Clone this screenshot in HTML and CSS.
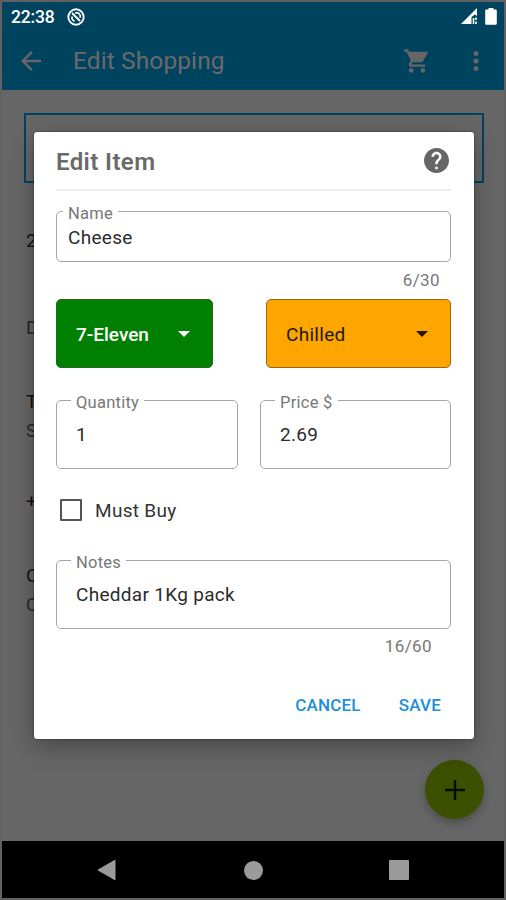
FILE: index.html
```html
<!DOCTYPE html>
<html lang="en">
<head>
<meta charset="utf-8">
<title>Edit Shopping</title>
<link rel="stylesheet" href="styles.css">
</head>
<body>
<div class="phone">
  <header class="top">
    <div class="status">
      <span class="clock">22:38</span>
      <svg class="notif" width="18" height="18" viewBox="0 0 18 18"><circle cx="9" cy="9" r="7.700" fill="none" stroke="#fff" stroke-width="1.900"/><path d="M5 5l8 8" stroke="#fff" stroke-width="2"/><path d="M5 8.500v2.500l2.500 2.300M8 4.700l3.500.4 1.800 2.300-.2 2.300" fill="none" stroke="#fff" stroke-width="1.600"/></svg>
      <span class="spacer"></span>
      <svg width="17" height="17" viewBox="0 0 17 17"><path d="M0 16L16 0v8l-2-1.500L10.500 9v7z" fill="#fff"/><path d="M12.500 10v6M15 9.500v2.500M15 13.500v2.500" stroke="#fff" stroke-width="1.600"/></svg>
      <svg class="battery" width="12" height="17" viewBox="0 0 12 17"><path d="M3.500 0h5v1.500h2c.8 0 1.300.5 1.300 1.300v12.700c0 .8-.5 1.300-1.300 1.300h-9c-.8 0-1.300-.5-1.300-1.300V2.800c0-.8.5-1.300 1.300-1.300h2z" fill="#fff"/></svg>
    </div>
    <div class="appbar">
      <svg class="back" width="20" height="20" viewBox="4 4 16 16"><path d="M20 11H7.830l5.590-5.590L12 4l-8 8 8 8 1.410-1.410L7.830 13H20z" fill="#666"/></svg>
      <h1>Edit Shopping</h1>
      <svg class="cart" width="28" height="28" viewBox="0 0 24 24"><path fill="#666" d="M7 18c-1.100 0-1.990.9-1.990 2S5.900 22 7 22s2-.9 2-2-.9-2-2-2zM1 2v2h2l3.600 7.590-1.350 2.450C4.520 15.370 5.480 17 7 17h12v-2H7.420c-.14 0-.25-.11-.25-.25l.03-.12.900-1.630h7.450c.75 0 1.410-.41 1.750-1.030L21.700 4H5.210l-.94-2H1zm16 16c-1.100 0-1.990.9-1.990 2s.89 2 1.990 2 2-.9 2-2-.9-2-2-2z"/></svg>
      <svg class="more" width="6" height="22" viewBox="0 0 6 22"><g fill="#666"><circle cx="3" cy="3.600" r="2.500"/><circle cx="3" cy="11" r="2.500"/><circle cx="3" cy="18.400" r="2.500"/></g></svg>
    </div>
  </header>
  <main class="page">
    <div class="search"></div>
    <div class="row r1">2</div>
    <div class="row r2">D</div>
    <div class="row r3">T<small>S</small></div>
    <div class="row r4">+</div>
    <div class="row r5">O<small>C</small></div>
    <div class="fab"><svg width="20" height="20" viewBox="0 0 20 20"><path d="M10 0v20M0 10h20" stroke="#080c00" stroke-width="2.400"/></svg></div>
  </main>
  <nav class="nav">
    <svg width="19" height="22" viewBox="0 0 19 22"><path d="M1 11L18 1.200v19.600z" fill="#9b9b9b" stroke="#9b9b9b" stroke-linejoin="round"/></svg>
    <span class="home"></span>
    <span class="recent"></span>
  </nav>
  <section class="dialog">
    <div class="title">
      <h2>Edit Item</h2>
      <svg width="25" height="25" viewBox="2 2 20 20"><path fill="#666" d="M12 2C6.480 2 2 6.480 2 12s4.480 10 10 10 10-4.480 10-10S17.520 2 12 2zm1 17h-2v-2h2v2zm2.070-7.750l-.9.920C13.450 12.900 13 13.500 13 15h-2v-.5c0-1.100.45-2.100 1.170-2.830l1.240-1.260c.37-.36.590-.86.590-1.410 0-1.100-.9-2-2-2s-2 .9-2 2H8c0-2.210 1.790-4 4-4s4 1.790 4 4c0 .88-.36 1.680-.93 2.250z"/></svg>
    </div>
    <fieldset class="field name"><legend>Name</legend><span class="value">Cheese</span></fieldset>
    <div class="count">6/30</div>
    <div class="pair">
      <div class="select shop"><span>7-Eleven</span><i class="caret"></i></div>
      <div class="select aisle"><span>Chilled</span><i class="caret"></i></div>
    </div>
    <div class="pair inputs">
      <fieldset class="field quantity"><legend>Quantity</legend><span class="value">1</span></fieldset>
      <fieldset class="field price"><legend>Price $</legend><span class="value">2.69</span></fieldset>
    </div>
    <div class="check"><span class="box"></span><span>Must Buy</span></div>
    <fieldset class="field notes"><legend>Notes</legend><span class="value">Cheddar 1Kg pack</span></fieldset>
    <div class="count notes-count">16/60</div>
    <div class="actions"><span>CANCEL</span><span>SAVE</span></div>
  </section>
</div>
</body>
</html>
```
FILE: styles.css
```css
* { box-sizing: border-box; }
body { margin: 0; font-family: Roboto, "Liberation Sans", sans-serif; }
svg { display: block; flex: none; }
.phone {
  position: relative;
  width: 506px;
  height: 900px;
  border: 2px solid #616161;
  display: flex;
  flex-direction: column;
  background: #666;
  overflow: hidden;
}
.top { height: 88px; background: #00435f; flex: none; }
.status { display: flex; height: 28px; align-items: center; padding: 1px 7px 0 9px; color: #fff; }
.clock { font-size: 17.500px; font-weight: 500; width: 56px; letter-spacing: -0.2px; }
.spacer { flex: 1; }
.battery { margin-left: 7px; }
.appbar { display: flex; height: 60px; align-items: center; padding: 1px 25px 0 19px; }
.appbar h1 {
  margin: 1px 0 0 32px;
  flex: 1;
  font-size: 24.500px;
  line-height: 30px;
  font-weight: 400;
  letter-spacing: .1px;
  color: #6a6a6a;
}
.cart { margin-right: 42px; }
.page { height: 751px; padding: 23px 20px 0 22px; display: flex; flex-direction: column; color: #111; flex: none; }
.search { height: 70px; border: 2px solid #00435f; flex: none; }
.row { font-size: 19px; line-height: 24px; padding-left: 2px; width: 20px; font-weight: 400; }
.row small { display: block; font-size: 18px; font-weight: 400; line-height: 24px; margin-top: 5px; color: #262626; }
.r1 { margin-top: 46px; }
.r2 { margin-top: 63px; color: #262626; }
.r3 { margin-top: 50px; }
.r4 { margin-top: 47px; }
.r5 { margin-top: 50px; }
.fab {
  align-self: flex-end;
  margin-top: auto;
  margin-bottom: 22px;
  width: 59px;
  height: 59px;
  border-radius: 50%;
  flex: none;
  background: #3d4f00;
  display: grid;
  place-items: center;
  box-shadow: 0 4px 9px rgba(0, 0, 0, .25);
}
.nav { flex: 1; background: #000; display: flex; align-items: center; padding: 1px 95px 0; justify-content: space-between; }
.home { width: 19px; height: 19px; border-radius: 50%; background: #9b9b9b; margin-left: 2px; }
.recent { width: 20px; height: 20px; border-radius: 1px; background: #9b9b9b; }
.dialog {
  position: absolute;
  left: 32px;
  top: 130px;
  width: 440px;
  height: 607px;
  padding: 0 23px 0 22px;
  background: #fff;
  border-radius: 3px;
  box-shadow: 0 0 2px rgba(0, 0, 0, .6), 0 8px 24px rgba(0, 0, 0, .3);
  display: flex;
  flex-direction: column;
}
.title { display: flex; height: 59px; border-bottom: 2px solid #eee; align-items: center; justify-content: space-between; padding-right: 2px; }
.title h2 { margin: 3px 0 0; font-size: 24px; font-weight: 600; color: #6a6a6a; line-height: 30px; letter-spacing: .4px; }
.field {
  margin: 0;
  padding: 0 19px;
  min-width: 0;
  border: 1px solid #a6a6a6;
  border-radius: 5px;
  font-size: 19px;
  letter-spacing: .3px;
  line-height: 24px;
  color: #2c2c2c;
}
.field legend { margin-left: -5px; padding: 5px 5px 0; font-size: 16.500px; line-height: 16px; height: 21px; color: #777; letter-spacing: .25px; }
.value { display: block; padding-top: 12px; }
.name { margin-top: 10px; height: 61px; padding: 0 11px; }
.name .value { padding-top: 4px; }
.count { margin-top: 7px; text-align: right; font-size: 17px; line-height: 22px; padding-right: 11px; color: #777; letter-spacing: .4px; }
.pair { display: flex; justify-content: space-between; margin-top: 8px; }
.select {
  display: flex;
  justify-content: space-between;
  align-items: center;
  height: 69px;
  border-radius: 5px;
  padding: 1px 22px 0 19px;
  font-size: 19px;
}
.shop { width: 157px; background: #008000; color: #fff; border: 1px solid #226622; font-weight: 500; }
.aisle { width: 185px; background: #ffa500; color: #21190a; border: 1px solid #996816; letter-spacing: .3px; }
.caret { border: 6px solid transparent; border-top-color: currentColor; border-bottom: 0; }
.inputs { margin-top: 22px; }
.inputs .field { height: 79px; }
.quantity { width: 182px; }
.price { width: 191px; }
.check { display: flex; align-items: center; gap: 13px; height: 24px; margin-top: 29px; padding-left: 4px; font-size: 19px; color: #333; letter-spacing: .3px; }
.box { width: 22px; height: 22px; border: 2px solid #555; border-radius: 1px; }
.notes { margin-top: 28px; height: 79px; }
.notes-count { padding-right: 19px; margin-top: 6px; }
.actions { display: flex; justify-content: flex-end; gap: 38px; margin-top: 36px; padding-right: 10px; font-size: 17px; line-height: 24px; font-weight: 500; letter-spacing: .2px; color: #1a90d9; }
```
